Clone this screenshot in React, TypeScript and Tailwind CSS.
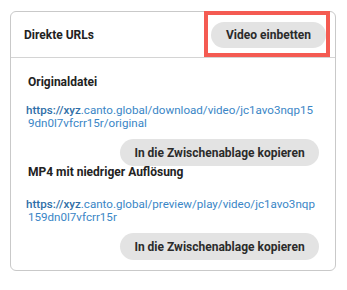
import React from "react";

export default function App() {
  return (
    <div className="w-[347px] h-[290px] bg-white pt-[11px] pl-[10px]" style={{ fontFamily: "Roboto, 'Liberation Sans', sans-serif" }}>
      <div className="relative w-[326px] h-[260px] border border-[#c9c9c9] rounded-[6px] flex flex-col">
        <div className="h-[46px] flex items-center justify-between pl-[13px] pr-[9px] border-b border-[#d4d4d4]">
          <span className="text-[12px] font-bold text-[#222]">Direkte URLs</span>
          <button className="h-[26px] w-[115px] rounded-full bg-[#e3e3e3] text-[12px] font-bold text-[#2b2b2b] flex items-center justify-center">
            Video einbetten
          </button>
        </div>
        <div className="absolute left-[193px] top-[-1px] w-[126px] h-[46px] border-[4px] border-[#f45b52]"></div>
        <div className="flex flex-col pl-[15px] pr-[16px] pt-[16px]">
          <div className="text-[12px] font-bold text-[#222] pl-[2px] leading-[16px]">Originaldatei</div>
          <div className="mt-[14px] text-[11.6px] leading-[13px] text-[#3a86c6]">
            <span className="font-medium text-[#2f6fa8]">https://xyz</span>.canto.global/download/video/jc1avo3nqp15
            <br />
            <span className="pl-[2px]">9dn0l7vfcrr15r/original</span>
          </div>
          <div className="flex justify-end mt-[9px]">
            <button className="h-[27px] w-[199px] rounded-full bg-[#e3e3e3] text-[12px] font-bold text-[#2b2b2b] flex items-center justify-center">
              In die Zwischenablage kopieren
            </button>
          </div>
          <div className="text-[12px] font-bold text-[#222] pl-[2px] leading-[14px] -mt-[1px]">MP4 mit niedriger Auflösung</div>
          <div className="mt-[19px] text-[11.6px] leading-[13px] text-[#3a86c6]">
            <span className="font-medium text-[#2f6fa8]">https://xyz</span>.canto.global/preview/play/video/jc1avo3nqp
            <br />
            <span className="pl-[2px]">159dn0l7vfcrr15r</span>
          </div>
          <div className="flex justify-end mt-[9px]">
            <button className="h-[27px] w-[199px] rounded-full bg-[#e3e3e3] text-[12px] font-bold text-[#2b2b2b] flex items-center justify-center">
              In die Zwischenablage kopieren
            </button>
          </div>
        </div>
      </div>
    </div>
  );
}
